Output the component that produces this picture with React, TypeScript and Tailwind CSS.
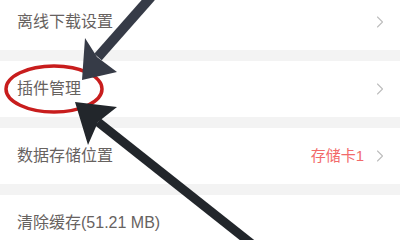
import { ChevronRight } from 'lucide-react';

const FONT = { fontFamily: '"Liberation Sans", "Noto Sans CJK SC", sans-serif' };

type Row = { label: string; value?: string; chevron?: boolean; first?: boolean };

const ROWS: Row[] = [
  { label: '离线下载设置', chevron: true, first: true },
  { label: '插件管理', chevron: true },
  { label: '数据存储位置', value: '存储卡1', chevron: true },
  { label: '清除缓存(51.21 MB)' },
];

function SettingRow({ row }: { row: Row }) {
  return (
    <div
      className={`flex items-center justify-between bg-white pl-[17px] pr-[10px] ${
        row.first ? 'h-[50px] pb-[6px]' : 'h-[56px]'
      }`}
    >
      <span className="text-[16px] text-[#67625f]">{row.label}</span>
      <div className="flex items-center gap-[6px]">
        {row.value && <span className="text-[15px] text-[#f26a6a]">{row.value}</span>}
        {row.chevron && <ChevronRight className="w-[20px] h-[20px] text-[#bdbdbd]" strokeWidth={1.3} />}
      </div>
    </div>
  );
}

export default function App() {
  return (
    <div className="relative w-[400px] h-[240px] overflow-hidden bg-[#f3f3f3]" style={FONT}>
      <div className="flex flex-col gap-[11px]">
        {ROWS.map((row) => (
          <SettingRow key={row.label} row={row} />
        ))}
      </div>

      {/* annotation overlay */}
      <svg className="absolute inset-0" width="400" height="240" viewBox="0 0 400 240">
        <ellipse cx="54" cy="89" rx="48" ry="23" fill="none" stroke="#c81d1d" strokeWidth="3.5" />
        <line x1="151" y1="-3" x2="98" y2="57" stroke="#363b47" strokeWidth="10" />
        <polygon points="82,80 85,38 97,57 117,72" fill="#363b47" />
        <line x1="252" y1="244" x2="98" y2="122" stroke="#22262b" strokeWidth="9" />
        <polygon points="75,102 117,107 98,122 88,145" fill="#22262b" />
      </svg>
    </div>
  );
}
